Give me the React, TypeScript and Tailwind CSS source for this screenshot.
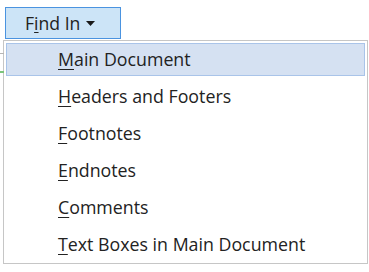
const items = [
  { key: "M", rest: "ain Document" },
  { key: "H", rest: "eaders and Footers" },
  { key: "F", rest: "ootnotes" },
  { key: "E", rest: "ndnotes" },
  { key: "C", rest: "omments" },
  { key: "T", rest: "ext Boxes in Main Document" },
];

export default function App() {
  return (
    <div
      className="relative w-[369px] h-[272px] bg-white text-[#222]"
      style={{ fontFamily: '"Open Sans", "Noto Sans", sans-serif' }}
    >
      {/* bits of the ribbon peeking out on the left */}
      <div className="absolute left-0 top-[53px] w-[4px] h-px bg-[#b5b5b5]" />
      <div className="absolute left-0 top-[71px] w-[4px] h-[2px] bg-[#7bc47b]" />

      <div className="pl-[5px] pt-[7px]">
        <div className="flex items-center h-[32px] w-[116px] pl-[19px] border border-[#4a93e0] bg-[#cce4f7] text-[17.6px]">
          <span>
            F<span className="underline underline-offset-2">i</span>nd In
          </span>
          <svg width="9" height="5" viewBox="0 0 9 5" className="ml-[6px] mt-[1px]">
            <path d="M0 0H9L4.5 5Z" fill="#1a1a1a" />
          </svg>
        </div>
      </div>

      <div className="ml-[3px] mt-[1px] w-[365px] h-[224px] border border-[#c6c6c6] bg-white pt-[2px] px-[2px]">
        {items.map((it, i) => (
          <div
            key={i}
            className={`flex items-center pl-[51px] text-[17.8px] leading-none ${
              i === 0
                ? "h-[33px] mb-[2px] bg-[#d5e1f2] border border-[#a9c4e9]"
                : "h-[37px] border border-transparent"
            }`}
          >
            <span className="underline underline-offset-[3px]">{it.key}</span>
            <span>{it.rest}</span>
          </div>
        ))}
      </div>
    </div>
  );
}
